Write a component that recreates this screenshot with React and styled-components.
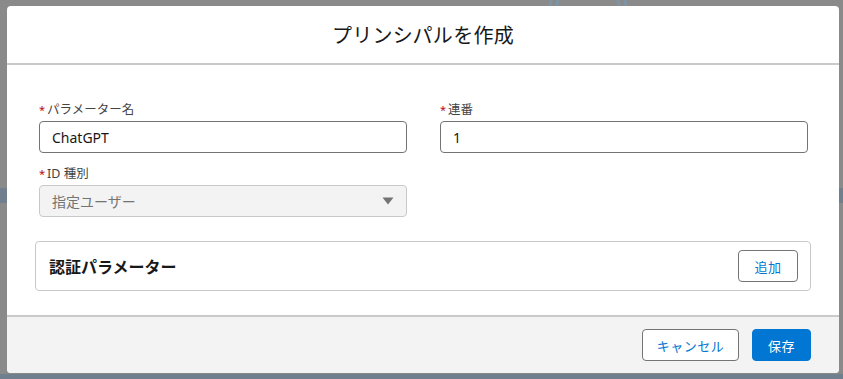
import React from "react";
import styled, { createGlobalStyle } from "styled-components";

const Global = createGlobalStyle`
  html, body { margin: 0; padding: 0; }
  body {
    background: #8a8a8a;
    font-family: "Noto Sans", "Noto Sans CJK JP", sans-serif;
    width: 843px; height: 379px; overflow: hidden;
  }
`;

const Backdrop = styled.div`
  position: relative;
  width: 843px;
  height: 379px;
  padding: 6px 4px 6px 7px;
  box-sizing: border-box;
`;

const Deco = styled.div`
  position: absolute;
  left: 0; right: 0;
  top: ${p => p.$top}px;
  height: ${p => p.$h}px;
  background: #6f7f8e;
`;

const Ring = styled.div`
  position: absolute;
  left: 555px; top: -22px;
  width: 60px; height: 60px;
  border-radius: 50%;
  border: 3px solid #7d94a6;
  box-shadow: 0 0 0 4px #8a8a8a, 0 0 0 7px #7d94a6;
`;

const Modal = styled.div`
  position: relative;
  z-index: 1;
  width: 832px;
  height: 367px;
  background: #fff;
  border-radius: 4px;
  display: flex;
  flex-direction: column;
  overflow: hidden;
`;

const Header = styled.div`
  height: 57px;
  border-bottom: 2px solid #c9c9c9;
  display: flex;
  align-items: center;
  justify-content: center;
`;

const Title = styled.h2`
  margin: 0;
  font-size: 20px;
  font-weight: 400;
  color: #181818;
  font-family: "Noto Sans CJK JP", sans-serif;
  letter-spacing: 0.3px;
`;

const Body = styled.div`
  flex: 1;
  padding: 36px 28px 0;
`;

const Grid = styled.div`
  display: grid;
  grid-template-columns: 368px 368px;
  column-gap: 33px;
  row-gap: 12px;
  padding: 0 4px;
`;

const Field = styled.div`
  display: flex;
  flex-direction: column;
`;

const Label = styled.label`
  font-size: 12.5px;
  color: #444;
  line-height: 18px;
  margin-bottom: 2px;
  font-family: "Noto Sans", "Noto Sans CJK JP", sans-serif;
  display: flex;
  align-items: center;
`;

const Req = styled.abbr`
  color: #ba0517;
  text-decoration: none;
  margin-right: 2px;
  font-size: 11px;
`;

const Input = styled.div`
  height: 32px;
  box-sizing: border-box;
  border: 1px solid ${p => (p.$disabled ? "#c9c9c9" : "#747474")};
  background: ${p => (p.$disabled ? "#f3f3f3" : "#fff")};
  border-radius: 4px;
  padding: 0 12px 0 12px;
  display: flex;
  align-items: center;
  justify-content: space-between;
  font-size: 14px;
  color: ${p => (p.$disabled ? "#747474" : "#181818")};
  font-family: "Noto Sans", "Noto Sans CJK JP", sans-serif;
`;

const Card = styled.div`
  margin-top: 24px;
  height: 50px;
  box-sizing: border-box;
  border: 1px solid #c9c9c9;
  border-radius: 4px;
  display: flex;
  align-items: center;
  justify-content: space-between;
  padding: 0 12px 0 13px;
`;

const CardTitle = styled.h3`
  margin: 0;
  font-size: 16px;
  font-weight: 700;
  color: #181818;
  font-family: "Noto Sans CJK JP", sans-serif;
`;

const Button = styled.button`
  height: 32px;
  width: ${p => p.$w}px;
  box-sizing: border-box;
  padding: 0;
  border-radius: 4px;
  border: 1px solid ${p => (p.$brand ? "#0176d3" : "#747474")};
  background: ${p => (p.$brand ? "#0176d3" : "#fff")};
  color: ${p => (p.$brand ? "#fff" : "#0176d3")};
  font-size: 13px;
  font-family: "Noto Sans CJK JP", sans-serif;
  letter-spacing: 0.5px;
  cursor: pointer;
`;

const Footer = styled.div`
  height: 56px;
  border-top: 2px solid #c9c9c9;
  background: #f3f3f3;
  display: flex;
  align-items: center;
  justify-content: flex-end;
  gap: 13px;
  padding: 0 28px;
`;

const Caret = () => (
  <svg width="12" height="8" viewBox="0 0 12 8">
    <path d="M0.5 0.5 L11.5 0.5 L6 7.5 Z" fill="#747474" />
  </svg>
);

export default function App() {
  return (
    <>
      <Global />
      <Backdrop>
        <Ring />
        <Deco $top={188} $h={15} />
        <Deco $top={374} $h={5} />
        <Modal>
          <Header>
            <Title>プリンシパルを作成</Title>
          </Header>
          <Body>
            <Grid>
              <Field>
                <Label><Req>*</Req>パラメーター名</Label>
                <Input>ChatGPT</Input>
              </Field>
              <Field>
                <Label><Req>*</Req>連番</Label>
                <Input>1</Input>
              </Field>
              <Field>
                <Label><Req>*</Req>ID 種別</Label>
                <Input $disabled>
                  指定ユーザー
                  <Caret />
                </Input>
              </Field>
            </Grid>
            <Card>
              <CardTitle>認証パラメーター</CardTitle>
              <Button $w={60}>追加</Button>
            </Card>
          </Body>
          <Footer>
            <Button $w={97}>キャンセル</Button>
            <Button $brand $w={59}>保存</Button>
          </Footer>
        </Modal>
      </Backdrop>
    </>
  );
}
